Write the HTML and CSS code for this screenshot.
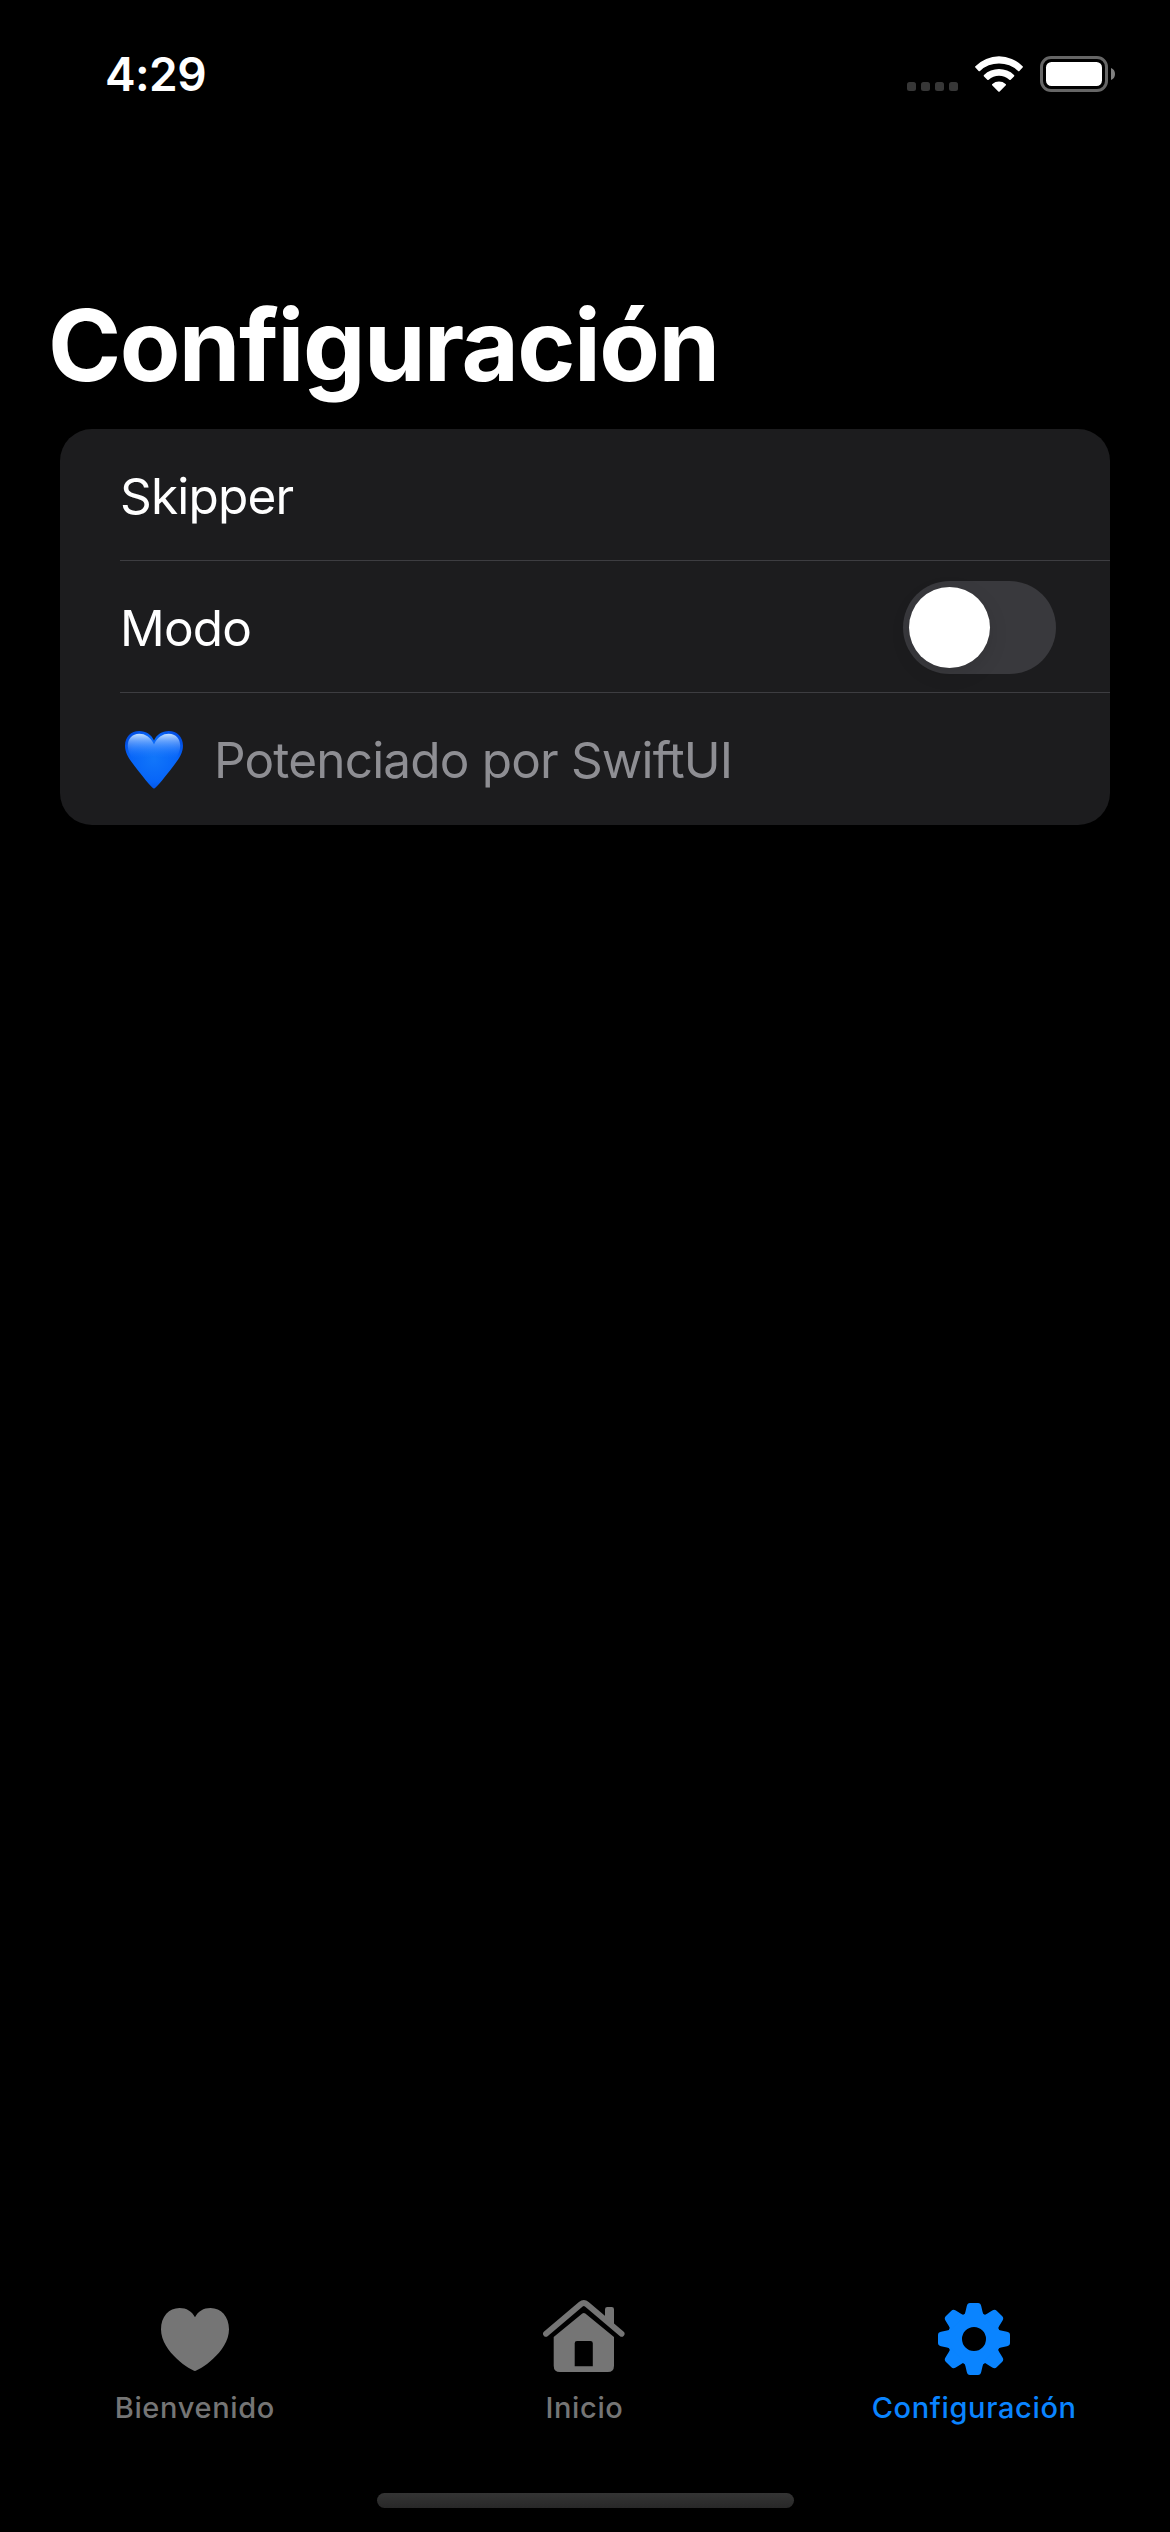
FILE: index.html
```html
<!DOCTYPE html>
<html lang="es">
<head>
<meta charset="utf-8">
<title>Configuración</title>
<link rel="stylesheet" href="styles.css">
</head>
<body>
<header class="status-bar">
  <time class="clock">4:29</time>
  <div class="status-icons">
    <svg class="signal" width="51" height="9" viewBox="0 0 51 9" fill="#373737"><rect width="9" height="9" rx="2.5"/><rect x="14" width="9" height="9" rx="2.5"/><rect x="28" width="9" height="9" rx="2.5"/><rect x="42" width="9" height="9" rx="2.5"/></svg>
    <svg width="48" height="36" viewBox="0 0 48 36" fill="#fff"><path d="M.4 10.2A33.2 33.2 0 0 1 47.6 10.2Q48.3 10.9 47.6 11.6L44.4 15Q43.7 15.6 43 15A27.5 27.5 0 0 0 5 15Q4.3 15.6 3.6 15L.4 11.6Q-.3 10.9 .4 10.2Z"/><path d="M9 19A21.9 21.9 0 0 1 39 19Q39.8 19.7 39 20.4L35.7 23.7Q35 24.4 34.3 23.7A15.6 15.6 0 0 0 13.7 23.7Q13 24.4 12.3 23.7L9 20.4Q8.2 19.7 9 19Z"/><path d="M17.4 28A10.2 10.2 0 0 1 30.6 28Q31.4 28.7 30.6 29.5L24.7 35.5Q24 36.1 23.3 35.5L17.4 29.5Q16.6 28.7 17.4 28Z"/></svg>
    <svg width="75" height="36" viewBox="0 0 75 36"><rect x="1.5" y="1.5" width="65" height="33" rx="9.5" fill="none" stroke="#666" stroke-width="3"/><rect x="6" y="6" width="56" height="24" rx="5.5" fill="#fff"/><path d="M71 12Q75 13.5 75 18T71 24Z" fill="#808080"/></svg>
  </div>
</header>
<main class="content">
  <h1 class="title">Configuración</h1>
  <section class="card">
    <div class="row"><span class="label">Skipper</span></div>
    <div class="row"><span class="label">Modo</span><button class="switch" role="switch" aria-checked="false" aria-label="Modo"><span class="knob"></span></button></div>
    <div class="row">
      <svg class="blue-heart" width="58" height="58" viewBox="0 0 58 58">
        <defs>
          <radialGradient id="heart-fill" cx=".5" cy=".48" r=".62"><stop offset="0" stop-color="#1176fa"/><stop offset=".65" stop-color="#0765f8"/><stop offset="1" stop-color="#0048dc"/></radialGradient>
          <linearGradient id="heart-gloss" x1="0" y1="0" x2="0" y2="1"><stop offset="0" stop-color="#cce7ff" stop-opacity=".95"/><stop offset=".28" stop-color="#85b7ff" stop-opacity=".75"/><stop offset=".8" stop-color="#3688ff" stop-opacity=".2"/><stop offset="1" stop-color="#1475ff" stop-opacity="0"/></linearGradient>
        </defs>
        <path d="M29 57.6C27.5 57.6 20 48.5 13 39.5C5 29 0 23 0 14.7C0 6 6 0 14.2 0C21 0 26.5 3.8 29 9.5C31.5 3.8 37 0 43.8 0C52 0 58 6 58 14.7C58 23 53 29 45 39.5C38 48.5 30.5 57.6 29 57.6Z" fill="url(#heart-fill)"/>
        <path d="M29 13.5C25.5 6 20 2.8 14.3 2.8C7 2.8 2.8 8 2.8 15C2.8 20 5 24 8 28Q29 23 50 28C53 24 55.2 20 55.2 15C55.2 8 51 2.8 43.7 2.8C38 2.8 32.5 6 29 13.5Z" fill="url(#heart-gloss)"/>
      </svg>
      <span class="label label-muted">Potenciado por SwiftUI</span>
    </div>
  </section>
</main>
<nav class="tab-bar">
  <a class="tab">
    <svg class="tab-icon" width="68" height="72" viewBox="0 0 68 72"><path d="M34 71C31 71 0 52.5 0 29.3C0 16.5 8 8 18.5 8C25.5 8 31 11.3 34 17.3C37 11.3 42.5 8 49.5 8C60 8 68 16.5 68 29.3C68 52.5 37 71 34 71Z" fill="currentColor"/></svg>
    <span class="tab-label">Bienvenido</span>
  </a>
  <a class="tab">
    <svg class="tab-icon" width="82" height="72" viewBox="0 0 82 72"><path d="M3 33.8L37.8 4.3Q40.8 1.8 43.8 4.3L78.6 33.8" fill="none" stroke="currentColor" stroke-width="5.8" stroke-linecap="round"/><path d="M62 18.5V9.3Q62 7 64.3 7H68.7Q71 7 71 9.3V26Z" fill="currentColor"/><path fill-rule="evenodd" d="M39.3 13.6Q40.8 12.2 42.3 13.6L71 37V65.7Q71 72 64.7 72H17Q10.7 72 10.7 65.7V37ZM34 41Q31.7 41 31.7 43.3V66.2H49.8V43.3Q49.8 41 47.5 41Z" fill="currentColor"/></svg>
    <span class="tab-label">Inicio</span>
  </a>
  <a class="tab tab-active">
    <svg class="tab-icon tab-icon-gear" width="72" height="72" viewBox="-36 -36 72 72" fill="currentColor">
      <defs><path id="tooth" d="M-11.5 -23Q-8.8 -24.5 -8.6 -27L-7.2 -33Q-6.6 -36 -4 -36H4Q6.6 -36 7.2 -33L8.6 -27Q8.8 -24.5 11.5 -23Z"/></defs>
      <circle r="19.2" fill="none" stroke="currentColor" stroke-width="14.4"/>
      <use href="#tooth"/><use href="#tooth" transform="rotate(45)"/><use href="#tooth" transform="rotate(90)"/><use href="#tooth" transform="rotate(135)"/><use href="#tooth" transform="rotate(180)"/><use href="#tooth" transform="rotate(225)"/><use href="#tooth" transform="rotate(270)"/><use href="#tooth" transform="rotate(315)"/>
    </svg>
    <span class="tab-label">Configuración</span>
  </a>
</nav>
<footer class="home-area"><div class="home-indicator"></div></footer>
</body>
</html>
```
FILE: styles.css
```css
* { box-sizing: border-box; }
body {
  margin: 0;
  width: 1170px;
  height: 2532px;
  display: flex;
  flex-direction: column;
  overflow: hidden;
  background: #000;
  color: #fff;
  font-family: Inter, "Liberation Sans", sans-serif;
}
svg { display: block; flex: none; }
.status-bar {
  height: 141px;
  padding: 44px 55px 0 105px;
  display: flex;
  justify-content: space-between;
  align-items: flex-start;
}
.clock {
  font-size: 46px;
  line-height: 60px;
  font-weight: 600;
  letter-spacing: -.6px;
}
.status-icons {
  height: 48px;
  display: flex;
  align-items: flex-end;
  gap: 17px;
}
.signal { margin-bottom: 1px; }
.content { flex: 1; padding: 144px 60px 0; }
.title {
  margin: 0 0 0 -12px;
  height: 144px;
  font-size: 99px;
  line-height: 120px;
  font-weight: 700;
  letter-spacing: -1.55px;
  white-space: nowrap;
}
.card {
  height: 396px;
  border-radius: 32px;
  background: #1c1c1e;
  overflow: hidden;
}
.row {
  height: 132px;
  margin-left: 60px;
  padding: 2px 54px 0 0;
  display: flex;
  align-items: center;
  border-bottom: 1px solid #3d3d41;
}
.row:last-child { border-bottom: 0; }
.label {
  padding-top: 1px;
  font-size: 49.5px;
  line-height: 60px;
  letter-spacing: -.83px;
  white-space: nowrap;
}
.label-muted { margin-left: 31px; padding: 0 0 1px; color: #8e8e93; }
.switch {
  width: 153px;
  height: 93px;
  margin-left: auto;
  padding: 6px;
  border: 0;
  border-radius: 47px;
  background: #39393d;
}
.knob {
  display: block;
  width: 81px;
  height: 81px;
  border-radius: 50%;
  background: #fff;
  box-shadow: 0 6px 20px rgba(0, 0, 0, .1);
}
.blue-heart { margin-left: 5px; }
.tab-bar {
  height: 193px;
  padding-right: 1px;
  display: grid;
  grid-template-columns: repeat(3, 1fr);
}
.tab {
  display: flex;
  flex-direction: column;
  align-items: center;
  color: #757575;
}
.tab-active { color: #0a84ff; }
.tab-icon { margin-bottom: 18px; }
.tab-icon-gear { margin: 3px 0 15px; }
.tab-label {
  font-size: 29px;
  line-height: 36px;
  font-weight: 500;
  letter-spacing: .65px;
}
.home-area {
  height: 39px;
  display: flex;
  justify-content: center;
}
.home-indicator {
  width: 417px;
  height: 15px;
  border-radius: 8px;
  background: linear-gradient(#343434, #282828);
}
```
